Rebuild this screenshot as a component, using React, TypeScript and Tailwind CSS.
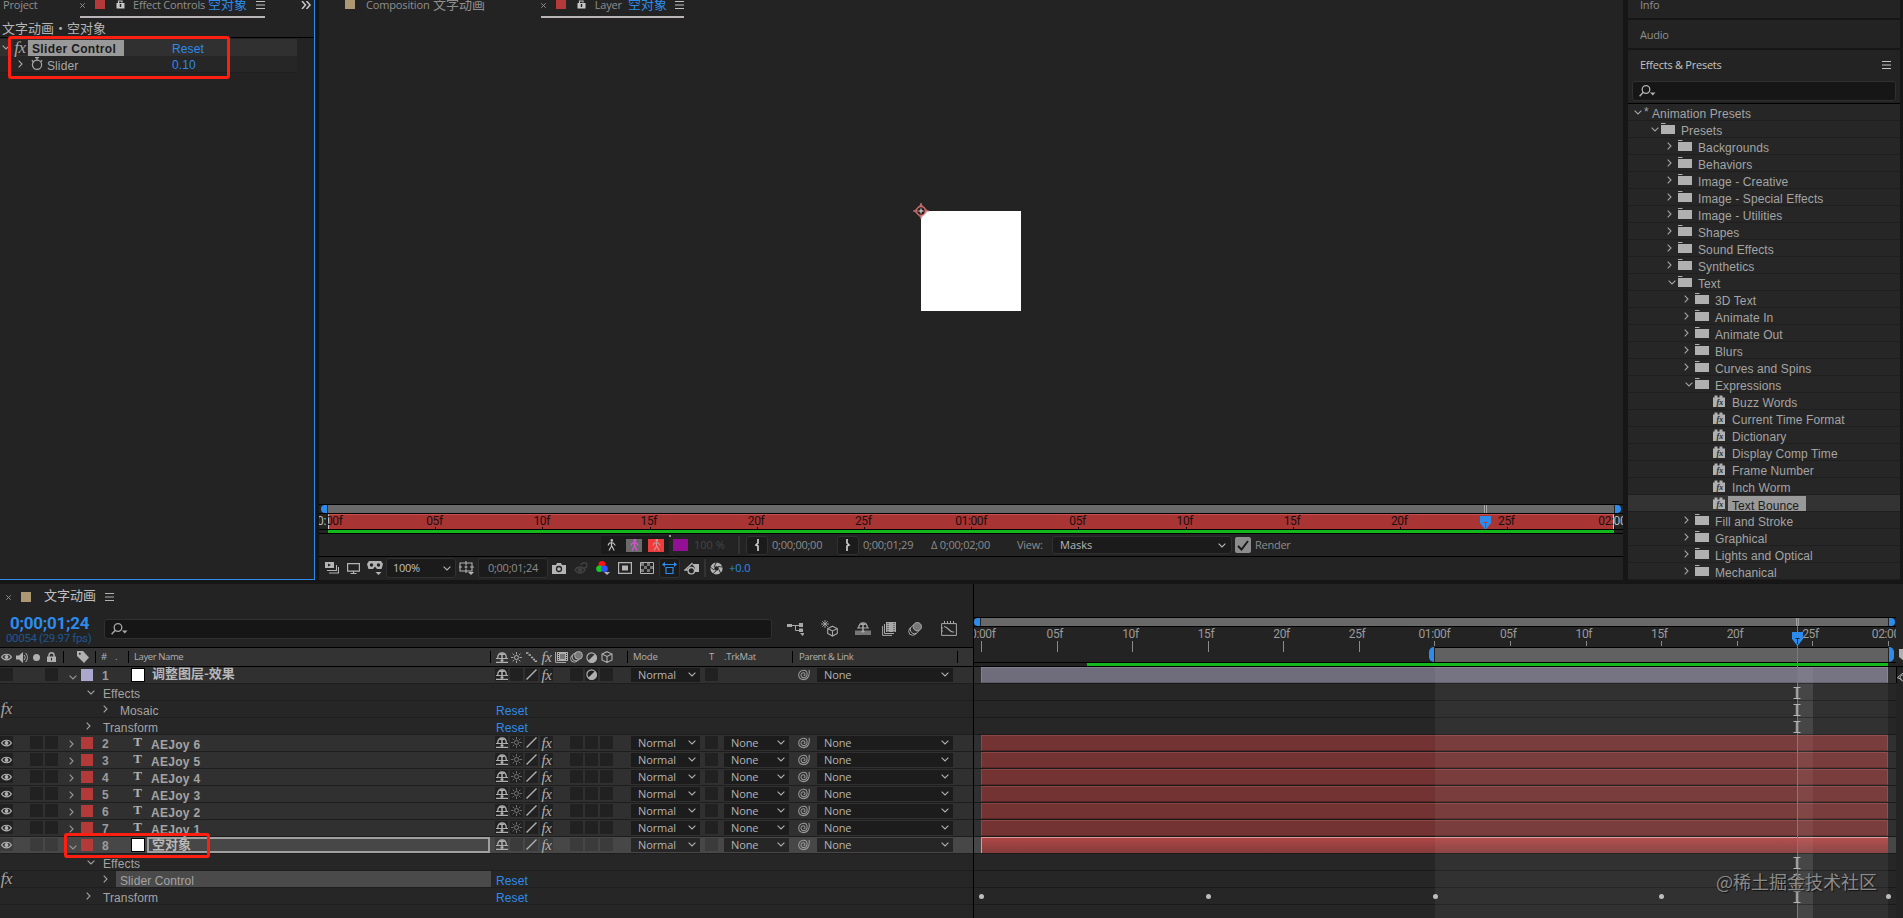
import type { ReactNode } from "react";

const UI = "[font-family:'Open_Sans','Noto_Sans_CJK_SC',sans-serif] text-[11px] leading-[14px] tracking-[-0.25px] whitespace-nowrap";
const TAB = "[font-family:'Open_Sans',sans-serif] text-[11px] leading-[10px] tracking-[-0.2px] whitespace-nowrap";
const HEAD = "[font-family:'Open_Sans',sans-serif] text-[9.5px] leading-[14px] tracking-[-0.4px] whitespace-nowrap";
const TREE = "[font-family:'Liberation_Sans','Noto_Sans_CJK_SC',sans-serif] text-[12px] leading-[16px] tracking-[0.1px] whitespace-nowrap";
const CJK = "[font-family:'Noto_Sans_CJK_SC',sans-serif] text-[13px] leading-[16px] whitespace-nowrap";
const TABCJK = "[font-family:'Noto_Sans_CJK_SC',sans-serif] text-[13px] leading-[8px] whitespace-nowrap";
const NUM = "[font-family:'Roboto',sans-serif] text-[12px] leading-[14px] tracking-[-0.35px] whitespace-nowrap";

type IconProps = { w: number; h: number; className?: string; children: ReactNode };
const Svg = ({ w, h, className = "", children }: IconProps) => (
  <svg width={w} height={h} viewBox={`0 0 ${w} ${h}`} className={`block shrink-0 ${className}`} fill="none" stroke="currentColor">
    {children}
  </svg>
);

const Down = ({ className = "" }: { className?: string }) => (
  <Svg w={8} h={5} className={className}><path d="M.6.7 4 4 7.4.7" strokeWidth="1.1" /></Svg>
);
const Right = ({ className = "" }: { className?: string }) => (
  <Svg w={5} h={8} className={className}><path d="M.7.6 4 4 .7 7.4" strokeWidth="1.1" /></Svg>
);
const Menu = () => (
  <Svg w={9} h={8}><path d="M0 .5h9M0 4h9M0 7.5h9" /></Svg>
);
const Close = () => (
  <Svg w={5} h={5}><path d="m.3.3 4.4 4.4M4.7.3.3 4.7" /></Svg>
);
const LockOpen = () => (
  <Svg w={9} h={9}><path d="M2.500 4V1h3.500v1.500" strokeWidth="1.200" /><path d="M.5 3h8v5.500h-8z" fill="currentColor" stroke="none" /><path d="M4.500 4v3" stroke="#232323" strokeWidth="1.500" /></Svg>
);
const Search = () => (
  <Svg w={17} h={12}><circle cx="7" cy="4.500" r="3.800" strokeWidth="1.300" /><path d="M4.300 7.300.6 11.200" strokeWidth="1.400" /><path d="M11 7.500h5.500l-2.700 3z" fill="currentColor" stroke="none" /></Svg>
);
const Folder = () => (
  <Svg w={14} h={11}><path d="M0 .5h4.500" /><path d="M0 2h14v9H0z" fill="currentColor" stroke="none" /></Svg>
);
const Preset = () => (
  <Svg w={12} h={12}>
    <path d="M0 2.500h1.500V.5h3v2h2V.5h3v2H12V12H0z" fill="currentColor" stroke="none" />
    <text x="3.500" y="10" fontSize="8" fontStyle="italic" fontFamily="Liberation Serif" fontWeight="bold" fill="#262626" stroke="none">fx</text>
  </Svg>
);
const Eye = () => (
  <Svg w={11} h={8}><path d="M.6 4C2.500.3 8.500.3 10.400 4 8.500 7.700 2.500 7.700.6 4z" strokeWidth="1.200" /><circle cx="5.500" cy="4" r="1.900" fill="currentColor" stroke="none" /></Svg>
);
const Fx = ({ big = false }: { big?: boolean }) => (
  <span className={big
    ? "block [font-family:'Liberation_Serif',serif] text-[17px] leading-[13px] italic tracking-[-0.5px]"
    : "block [font-family:'Liberation_Serif',serif] text-[15px] leading-[12px] italic tracking-[-0.5px]"}>fx</span>
);
const Shy = () => (
  <Svg w={12} h={11}><path d="M1.700 6C1.700-.8 10.300-.8 10.300 6" strokeWidth="1.300" /><path d="M3 3C4 .8 8 .8 9 3z" fill="currentColor" stroke="none" /><path d="M0 6.500h12M0 10.400h12" strokeWidth="1.100" /><path d="M6 2v8M4.500 8.500h3" strokeWidth="1.500" /></Svg>
);
const Sun = ({ dim = false }: { dim?: boolean }) => (
  <Svg w={11} h={11} className={dim ? "text-[#777]" : ""}>
    <circle cx="5.500" cy="5.500" r="2" /><path d="M5.500 0v2.500M5.500 8.500V11M0 5.500h2.500M8.500 5.500H11M1.600 1.600l1.700 1.700M7.700 7.700l1.700 1.700M9.400 1.600 7.700 3.300M3.300 7.700 1.600 9.400" strokeWidth=".9" />
  </Svg>
);
const Slash = () => (<Svg w={11} h={11}><path d="M.5 10.500 10.500.5" strokeWidth="1.400" /></Svg>);
const Steps = () => (<Svg w={11} h={10}><path d="M0 1h2.500M2.500 3H5M5 5.500h2.200M7 7.500h2M8.500 9.300H11" strokeWidth="1.700" /></Svg>);
const Film = () => (
  <Svg w={13} h={11}><path d="M.6 0v10.400H11" /><path d="M2 0h11v9H2z" fill="currentColor" stroke="none" /><path d="M5 2h5v5H5z" fill="#777" stroke="none" /><path d="M3.500 1v8M11.500 1v8" stroke="#2b2b2b" strokeDasharray="1 1" /></Svg>
);
const Blur = () => (
  <Svg w={13} h={12}><circle cx="4.300" cy="7.500" r="3.700" /><circle cx="6" cy="6" r="3.900" fill="#333" /><circle cx="8.500" cy="4.400" r="3.900" fill="#777" /></Svg>
);
const Half = () => (
  <Svg w={11} h={11}><circle cx="5.500" cy="5.500" r="4.600" strokeWidth="1.200" /><path d="M9 2A5 5 0 1 1 2 9z" fill="currentColor" stroke="none" /></Svg>
);
const Cube = () => (
  <Svg w={12} h={12}><path d="M6 .7 11 3v6L6 11.400 1 9V3zM1 3l5 2.400L11 3M6 5.400v6" strokeWidth="1.100" /></Svg>
);
const Spiral = () => (
  <Svg w={12} h={12}><path d="M11 .8c1 5-1 9.800-5 9.800C2.500 10.600.7 8.500.7 6S3 1.300 5.600 1.300c2 0 3.500 1.600 3.500 3.700S7.500 8.600 5.800 8.600 3 7.300 3 6.100s.9-2.300 2.200-2.300S7 4.700 7 5.500 6.300 6.600 5.600 6.400" strokeWidth="1.050" /></Svg>
);
const Person = () => (
  <Svg w={9} h={12}><circle cx="4.800" cy="1.400" r="1.300" fill="currentColor" stroke="none" /><path d="M4.500 3v4.200L2 11.500M4.800 7l2.400 4.500M1 6.500 2.300 4h4L8.300 6.500" strokeWidth="1.200" /></Svg>
);
const Stopwatch = () => (
  <Svg w={12} h={13}><circle cx="6" cy="7.800" r="4.600" strokeWidth="1.200" /><path d="M4 .6h4M6 .6v2.500M.8 3.200l1.600 1.500M11.200 3.200 9.600 4.700" strokeWidth="1.200" /></Svg>
);

/* ---------- Effect controls ---------- */
function EffectControls() {
  return (
    <section className="relative h-[580px] w-[315px] shrink-0 overflow-hidden border-r border-b border-[#2d8ceb] bg-[#232323]">
      <div className="flex h-[18px] items-start text-[#8f8f8f]">
        <span className={`${TAB} ml-[3px] w-[77px] shrink-0`}>Project</span>
        <div className="flex h-[18px] w-[185px] shrink-0 items-start border-b-2 border-[#b8b4b8]">
          <span className="mt-[3px]"><Close /></span>
          <span className="ml-[10px] h-[9px] w-[10px] shrink-0 bg-[#b43a39]" />
          <span className="ml-[11px] text-[#c8c8c8]"><LockOpen /></span>
          <span className={`${TAB} ml-[8px] w-[75px] shrink-0`}>Effect Controls</span>
          <span className={`${TABCJK} w-[39px] shrink-0 text-[#2d8ceb]`}>空对象</span>
          <span className="mt-[1px] ml-[9px] text-[#c0c0c0]"><Menu /></span>
        </div>
        <span className="ml-[36px] mt-[1px] text-[#c8c8c8]"><Svg w={10} h={8}><path d="M1 0l3.500 4L1 8M5.500 0 9 4 5.500 8" strokeWidth="1.500" /></Svg></span>
      </div>
      <div className={`${CJK} flex h-[20px] border-b border-black pl-[2px] pt-[2px] text-[#b5b5b5]`}>
        <span className="w-[52px]">文字动画</span><span className="w-[13px] text-center">•</span><span>空对象</span>
      </div>
      <div className="mt-px flex h-[17px] w-[297px] items-center bg-[#303030] text-[#a8a8a8]">
        <Down className="ml-[2px]" />
        <span className="ml-[3px] flex h-[15px] w-[14px] items-center justify-center bg-[#262626]"><Fx big /></span>
        <span className={`${TREE} ml-[1px] h-[16px] w-[96px] bg-[#999] pl-1 font-bold text-[12.5px] tracking-[0.350px] text-[#1b1b1b]`}><span className="relative top-[1px]">Slider Control</span></span>
        <span className={`${TREE} relative top-[1px] ml-[48px] text-[#2d8ceb]`}>Reset</span>
      </div>
      <div className="flex h-[17px] w-[297px] items-center border-b border-[#1e1e1e] bg-[#262626] text-[#a8a8a8]">
        <Right className="ml-[18px]" />
        <span className="ml-[8px] -mt-[2px]"><Stopwatch /></span>
        <span className={`${TREE} relative top-[2px] ml-[4px] w-[125px]`}>Slider</span>
        <span className={`${TREE} relative top-[1px] text-[#2d8ceb]`}>0.10</span>
      </div>
      <div className="absolute top-[36px] left-[8px] h-[43px] w-[222px] rounded-[3px] border-[3px] border-[#ff1f10]" />
    </section>
  );
}

/* ---------- Layer viewer ---------- */
const VIEW_MARKS = ["0:00f", "05f", "10f", "15f", "20f", "25f", "01:00f", "05f", "10f", "15f", "20f", "25f", "02:00f"];

const PlayheadHandle = ({ mark = "#222" }: { mark?: string }) => (
  <Svg w={11} h={14}><path d="M0 0h11v7l-5.500 7L0 7z" fill="#2d8ceb" stroke="none" /><path d="M3.500 6.500h4M5.500 7v5" stroke={mark} /></Svg>
);

function LayerViewer() {
  const box = "flex shrink-0 items-center justify-center rounded-[3px] border border-[#303030] bg-[#1b1b1b]";
  return (
    <section className="ml-[4px] flex h-[580px] w-[1304px] shrink-0 flex-col overflow-hidden bg-[#232323]">
      <div className="flex h-[18px] items-start text-[#8f8f8f]">
        <span className="ml-[26px] h-[9px] w-[10px] bg-[#ad9874]" />
        <span className={`${TAB} ml-[11px] w-[67px] tracking-[-0.15px]`}>Composition</span>
        <span className={`${TABCJK} w-[108px]`}>文字动画</span>
        <div className="flex h-[18px] w-[143px] items-start border-b-2 border-[#b8b4b8]">
          <span className="mt-[3px]"><Close /></span>
          <span className="ml-[10px] h-[9px] w-[10px] bg-[#b43a39]" />
          <span className="ml-[11px] text-[#c8c8c8]"><LockOpen /></span>
          <span className={`${TAB} ml-[9px] w-[34px]`}>Layer</span>
          <span className={`${TABCJK} w-[39px] text-[#2d8ceb]`}>空对象</span>
          <span className="mt-[1px] ml-[8px] text-[#c0c0c0]"><Menu /></span>
        </div>
      </div>
      <div className="relative h-[486px]">
        <div className="ml-[602px] mt-[193px] h-[100px] w-[100px] bg-white" />
        <div className="absolute left-[594px] top-[-15px] mt-[200px]">
          <Svg w={16} h={16}><path d="M8 0v4M8 12v4M0 8h4M12 8h4" stroke="#d98080" strokeWidth="1.200" /><path d="M8 1.500 14.500 8 8 14.500 1.500 8z" stroke="#d98080" /><circle cx="8" cy="8" r="4.300" stroke="#d96a6a" strokeWidth="1.300" fill="#2a2020" /><path d="M8 5.500v5M5.500 8h5" stroke="#eee" /></Svg>
        </div>
      </div>
      <div className="flex h-[10px] border-y border-black">
        <span className="ml-[2px] w-[6px] rounded-l-[6px] bg-[#2d8ceb]" />
        <span className="ml-px w-[1286px] bg-[#696969]"><span className="ml-[1156px] block h-full w-[3px] border-x border-[#aaa] bg-[#d22]" /></span>
        <span className="ml-px w-[6px] rounded-r-[6px] bg-[#2d8ceb]" />
      </div>
      <div className="relative h-[15px] overflow-hidden">
        <div className="ml-[9px] h-[15px] w-[1286px] border-x border-t border-[#ccc] border-t-[#c45050] bg-[#a83434]" />
        <div className="absolute top-0 left-[9px] flex w-[1400px]">
          {VIEW_MARKS.map((m, i) => (
            <span key={i} className={`${NUM} w-[107.200px] shrink-0 text-[#1c1010]`}>
              <span className={i === 0 ? "-ml-[11px] block" : i === 6 || i === 12 ? "-ml-[16px] block" : "-ml-[9px] block"}>
                {i === 0 ? <><span className="text-[#bbb]">0:</span>00f</> : i === 12 ? <>02:<span className="text-[#bbb]">00f</span></> : m}
              </span>
              {i > 0 && <span className="absolute top-[13px] block h-[2px] w-px bg-black" />}
            </span>
          ))}
        </div>
        <div className="absolute top-[2px] left-[1161px]"><PlayheadHandle mark="#c33" /></div>
      </div>
      <div className="h-[5px] border-y border-black bg-[#232323]"><div className="ml-[9px] h-[3px] w-[1286px] bg-[#12b81c]" /></div>
      <div className="flex h-[23px] items-center border-b border-black text-[#8c8c8c]">
        <div className="ml-[282px] flex h-[18px] w-[68px] items-center bg-[#1b1b1b]">
          <span className="ml-[6px] text-[#c4c4c4]"><Person /></span>
          <span className="ml-[10px] flex h-[13px] w-[16px] items-center justify-center bg-[#6a6a6a] text-[#e052e0]"><Person /></span>
          <span className="ml-[6px] flex h-[13px] w-[16px] items-center justify-center bg-[#ee3b3b] text-[#c99]"><Person /></span>
        </div>
        <span className="-mt-[18px] size-[2px] bg-[#999]" />
        <span className="ml-[2px] h-[12px] w-[15px] bg-[#930f93]" />
        <span className={`${UI} ml-[6px] w-[44px] tracking-[0px] text-[#454545]`}>100 %</span>
        <span className="h-[18px] w-[2px] bg-[#333]" />
        <span className={`${box} ml-[6px] h-[19px] w-[22px] text-[#ccc]`}><Svg w={6} h={12}><path d="M4 0v4L2 6l2 1v5" strokeWidth="1.700" /></Svg></span>
        <span className={`${UI} ml-[4px] w-[65px]`}>0;00;00;00</span>
        <span className={`${box} h-[19px] w-[22px] text-[#ccc]`}><Svg w={6} h={12}><path d="M2 0v4l2 2-2 1v5" strokeWidth="1.700" /></Svg></span>
        <span className={`${UI} ml-[4px] w-[68px]`}>0;00;01;29</span>
        <span className={`${UI} w-[86px]`}>Δ 0;00;02;00</span>
        <span className={`${UI} w-[35px]`}>View:</span>
        <span className="flex h-[18px] w-[180px] items-center justify-between rounded-[3px] border border-[#303030] bg-[#1b1b1b] pr-[5px] pl-[7px] text-[#b8b8b8]"><span className={`${UI} tracking-[0px]`}>Masks</span><Down /></span>
        <span className="ml-[3px] flex size-[16px] items-center justify-center rounded-[2px] bg-[#8c8c8c]"><Svg w={12} h={11}><path d="M1 6l3.500 3.500L11 1" stroke="#1a1a1a" strokeWidth="2" /></Svg></span>
        <span className={`${UI} ml-[4px]`}>Render</span>
      </div>
      <div className="flex h-[23px] items-center pb-px text-[#b4b4b4]">
        <Svg w={14} h={12} className="ml-[6px]"><path d="M0 0h9v6H0z" fill="currentColor" stroke="none" /><path d="M3 1.500v3L6 3z" fill="#222" stroke="none" /><path d="M2 8.500h9.500V3M4 11h9.500V5" strokeWidth="1.100" /></Svg>
        <Svg w={13} h={11} className="ml-[8px]"><path d="M.6.6h11.800v7.500H.6zM6.500 8v2.500M3.500 10.500h6" strokeWidth="1.200" /></Svg>
        <Svg w={16} h={14} className="ml-[7px]"><path d="M2 0h12l2 3-1.500 5H10L8 5.500 6 8H1.500L0 3z" fill="currentColor" stroke="none" /><circle cx="4.500" cy="4" r="1.700" fill="#222" stroke="none" /><circle cx="11.500" cy="4" r="1.700" fill="#222" stroke="none" /><path d="M8.500 11h6l-3 3z" fill="currentColor" stroke="none" /></Svg>
        <span className="ml-[3px] flex h-[20px] w-[70px] items-center justify-between rounded-[3px] border border-[#303030] bg-[#1b1b1b] pr-[4px] pl-[6px]"><span className={`${UI} text-[#c0c0c0]`}>100%</span><Down /></span>
        <Svg w={15} h={14} className="ml-[3px]"><path d="M1 2h12v8H1zM7 0v4M7 8v4M0 6h3M11 6h4M5.500 6h3M7 4.500v3" strokeWidth="1.100" /><path d="M9 11h6l-3 3z" fill="currentColor" stroke="none" /></Svg>
        <span className={`${box} ml-[4px] h-[20px] w-[70px] text-[#8c8c8c]`}><span className={UI}>0;00;01;24</span></span>
        <Svg w={14} h={11} className="ml-[4px]"><path d="M0 2h4l1-2h4l1 2h4v9H0z" fill="currentColor" stroke="none" /><circle cx="7" cy="6" r="2.500" stroke="#222" strokeWidth="1.300" /></Svg>
        <Svg w={14} h={13} className="ml-[8px] text-[#404040]"><path d="M1 8c2-4 8-4 10 0-2 4-8 4-10 0zM7 3c1-3 6-3 6 0 0 2-1 3-3 3" strokeWidth="1.400" /><circle cx="6" cy="8" r="2" fill="currentColor" /></Svg>
        <Svg w={14} h={14} className="ml-[8px]"><g stroke="none"><circle cx="6" cy="3.500" r="3.500" fill="#f11" /><circle cx="3.500" cy="7.800" r="3.300" fill="#1c2" /><circle cx="8.500" cy="7.800" r="3.300" fill="#35f" /><path d="M8 11h6l-3 3z" fill="currentColor" /></g></Svg>
        <Svg w={14} h={12} className="ml-[8px]"><path d="M.6.6h12.800v10.800H.6z" strokeWidth="1.200" /><path d="M4 3.500h6v5H4z" fill="currentColor" stroke="none" /></Svg>
        <Svg w={14} h={12} className="ml-[8px]"><path d="M.5.5h13v11H.5z" /><path d="M1 2.500h12M1 8.500h12" strokeDasharray="3 3" strokeWidth="3" stroke="#777" /><path d="M4 5.500h9" strokeDasharray="3 3" strokeWidth="3" stroke="#777" /></Svg>
        <span className={`${box} ml-[5px] h-[20px] w-[21px] text-[#2d8ceb]`}><Svg w={15} h={12}><path d="M1 2.500h13M4 5.500h7v6H4z" strokeWidth="1.200" /><path d="M0 2.500 3 0v5zM15 2.500 12 0v5z" fill="currentColor" stroke="none" /></Svg></span>
        <Svg w={15} h={13} className="ml-[4px]"><path d="M8.500 1 1 8h5" strokeWidth="1.300" /><path d="M8 2h7v8h-4V6z" fill="currentColor" stroke="none" /><circle cx="7.300" cy="8.700" r="3.200" fill="#232323" strokeWidth="1.300" /></Svg>
        <span className="ml-[5px] h-[18px] w-[2px] bg-[#333]" />
        <Svg w={13} h={13} className="ml-[4px]"><circle cx="6.500" cy="6.500" r="4.200" strokeWidth="3.800" /><path d="M6.500 0 4 5M12.800 5 8 4.500M11 12 9 7.500M2.500 12 6 9M.3 5 4 8" stroke="#232323" strokeWidth=".9" /></Svg>
        <span className={`${UI} ml-[6px] tracking-[-0.100px] text-[#2d8ceb]`}>+0.0</span>
      </div>
    </section>
  );
}

/* ---------- Effects & Presets ---------- */
type Node = { d: 1 | 2 | 3 | 4; t: string; open?: boolean; sel?: boolean };
const TREE_NODES: Node[] = [
  { d: 1, t: "Presets", open: true },
  { d: 2, t: "Backgrounds" }, { d: 2, t: "Behaviors" }, { d: 2, t: "Image - Creative" }, { d: 2, t: "Image - Special Effects" },
  { d: 2, t: "Image - Utilities" }, { d: 2, t: "Shapes" }, { d: 2, t: "Sound Effects" }, { d: 2, t: "Synthetics" },
  { d: 2, t: "Text", open: true },
  { d: 3, t: "3D Text" }, { d: 3, t: "Animate In" }, { d: 3, t: "Animate Out" }, { d: 3, t: "Blurs" }, { d: 3, t: "Curves and Spins" },
  { d: 3, t: "Expressions", open: true },
  { d: 4, t: "Buzz Words" }, { d: 4, t: "Current Time Format" }, { d: 4, t: "Dictionary" }, { d: 4, t: "Display Comp Time" },
  { d: 4, t: "Frame Number" }, { d: 4, t: "Inch Worm" }, { d: 4, t: "Text Bounce", sel: true },
  { d: 3, t: "Fill and Stroke" }, { d: 3, t: "Graphical" }, { d: 3, t: "Lights and Optical" }, { d: 3, t: "Mechanical" },
];
const INDENT = { 1: "w-[33px]", 2: "w-[50px]", 3: "w-[67px]", 4: "w-[85px]" };

function EffectsPresets() {
  return (
    <section className="ml-[5px] flex h-[580px] w-[272px] shrink-0 flex-col overflow-hidden bg-[#161616] text-[#8f8f8f]">
      <div className="h-[18px] bg-[#232323] pl-[12px]"><div className={TAB}>Info</div></div>
      <div className="mt-[2px] flex h-[28px] items-center bg-[#232323] pl-[12px] pt-px"><span className={UI}>Audio</span></div>
      <div className="mt-[2px] h-[54px] border-b border-black bg-[#232323]">
        <div className="flex h-[29px] items-center justify-between pr-[9px] pl-[12px] text-[#c4c4c4]"><span className={UI}>Effects &amp; Presets</span><Menu /></div>
        <div className="mx-[4px] mt-[2px] flex h-[20px] items-center rounded-[3px] border border-[#303030] bg-[#161616] pl-[6px] text-[#b0b0b0]"><Search /></div>
      </div>
      <div className={`${TREE} flex h-[17px] shrink-0 items-center border-b border-[#1e1e1e] bg-[#262626] pl-[6px] text-[#a4a4a4]`}>
        <Down /><span className="ml-[2px] w-[8px]">*</span><span className="relative top-[2px]">Animation Presets</span>
      </div>
      {TREE_NODES.map((n) => (
        <div key={n.t} className={`flex h-[17px] shrink-0 items-center border-b border-[#1e1e1e] text-[#a4a4a4] ${n.sel ? "bg-[#333]" : "bg-[#262626]"}`}>
          <span className={`${INDENT[n.d]} flex justify-end ${n.open ? "pr-[2px]" : "pr-[6px]"}`}>{n.d < 4 && (n.open ? <Down /> : <Right />)}</span>
          <span className="-mt-px w-[16px] text-[#b0b0b0]">{n.d < 4 ? <Folder /> : <Preset />}</span>
          <span className={n.sel ? `${TREE} -ml-px h-[15px] w-[78px] bg-[#999] pl-[4px] text-[#1b1b1b]` : n.d < 4 ? `${TREE} pl-[4px]` : `${TREE} pl-[3px]`}><span className="relative top-[2px]">{n.t}</span></span>
        </div>
      ))}
    </section>
  );
}

/* ---------- Timeline ---------- */
const Cell = ({ on = true, sel = false, children }: { on?: boolean; sel?: boolean; children?: ReactNode }) => (
  <span className={`flex h-[13px] w-[13px] shrink-0 items-center justify-center ${on ? (sel ? "bg-[#3b3b3b]" : "bg-[#212121]") : ""}`}>{children}</span>
);
const Drop = ({ className, label, sel }: { className: string; label: string; sel: boolean }) => (
  <span className={`${className} flex h-[14px] items-center justify-between pr-[4px] pl-[7px] ${sel ? "bg-[#262626]" : "bg-[#1c1c1c]"}`}>
    <span className={`${UI} -mt-px tracking-[-0.100px] text-[#b4b4b4]`}>{label}</span><Down className="-mt-px" />
  </span>
);

type Layer = { n: number; name: string; kind: "text" | "solid"; adj?: boolean; sel?: boolean };
function LayerRow({ n, name, kind, adj = false, sel = false }: Layer) {
  return (
    <div className={`flex h-[17px] items-start border-b border-[#1e1e1e] pt-[1px] text-[#b0b0b0] ${sel ? "bg-[#474747]" : "bg-[#303030]"}`}>
      <Cell sel={sel}>{!adj && <Eye />}</Cell>
      <span className="ml-[17px]"><Cell on={!adj} sel={sel} /></span>
      <span className="ml-[2px]"><Cell sel={sel} /></span>
      <span className="ml-[11px] flex h-[14px] w-[12px] items-center text-[#999]">{adj || sel ? <Down className="mt-1" /> : <span className="mt-[2px]"><Right /></span>}</span>
      <span className={`mt-[1px] h-[12px] w-[12px] ${adj ? "bg-[#aaa8cc]" : "bg-[#b43a39]"}`} />
      <span className={`${TREE} ml-[9px] w-[29px] font-bold text-[#9c9c9c]`}>{n}</span>
      {kind === "solid"
        ? <span className="h-[14px] w-[14px] border border-black bg-white" />
        : <span className="w-[14px] pr-px text-center [font-family:'Liberation_Serif',serif] text-[13px] leading-[12px] font-bold">T</span>}
      {sel
        ? <span className={`${CJK} -mt-px ml-[2px] flex h-[16px] w-[343px] items-center border-2 border-[#a0a0a0] pl-[3px] font-bold text-[#b8b8b8]`}><span className="-mt-[2px]">{name}</span></span>
        : <span className={kind === "solid" ? `${CJK} -mt-[3px] ml-[7px] w-[338px] font-bold text-[#b8b8b8]` : `${TREE} ml-[6px] w-[339px] pt-px font-bold tracking-[0.300px] text-[#a4a4a4]`}>{name}</span>}
      <div className="ml-[5px] flex w-[136px] gap-[2px]">
        <Cell sel={sel}><Shy /></Cell>
        <Cell sel={sel}>{!adj && !sel && <Sun dim />}</Cell>
        <Cell sel={sel}><Slash /></Cell>
        <Cell sel={sel}><Fx /></Cell>
        <Cell on={false} />
        <Cell sel={sel} />
        <Cell sel={sel}>{adj && <Half />}</Cell>
        <Cell sel={sel} />
      </div>
      <Drop className="w-[69px]" label="Normal" sel={sel} />
      <span className="ml-[5px] w-[19px]"><Cell sel={sel} /></span>
      {adj ? <span className="w-[65px]" /> : <Drop className="w-[65px]" label="None" sel={sel} />}
      <span className="ml-[9px] mt-px w-[19px] text-[#999]"><Spiral /></span>
      <Drop className="w-[136px]" label="None" sel={sel} />
    </div>
  );
}

type Prop = { label: string; deep?: boolean; open?: boolean; reset?: boolean; fx?: boolean; hl?: boolean };
function PropRow({ label, deep = false, open = false, reset = false, fx = false, hl = false }: Prop) {
  return (
    <div className="flex h-[17px] items-start border-b border-[#1e1e1e] bg-[#262626] text-[#a4a4a4]">
      <span className="mt-px w-[13px]">{fx && <Cell><Fx big /></Cell>}</span>
      <span className={`flex h-[16px] items-center ${deep ? "w-[103px] pl-[90px]" : open ? "w-[86px] pl-[74px]" : "w-[86px] pl-[73px]"}`}>{open ? <Down /> : <Right />}</span>
      <span className={`${TREE} ${deep ? "w-[375px] pl-[4px]" : "w-[392px] pl-[4px]"} ${hl ? "bg-[#4a4a4a]" : ""}`}><span className="relative top-[2px]">{label}</span></span>
      {reset && <span className={`${TREE} relative top-[2px] ml-[5px] text-[#2d8ceb]`}>Reset</span>}
    </div>
  );
}

const Sep = ({ className = "" }: { className?: string }) => <span className={`block h-[12px] w-px shrink-0 bg-black ${className}`} />;
const MARKS = ["0:00f", "05f", "10f", "15f", "20f", "25f", "01:00f", "05f", "10f", "15f", "20f", "25f", "02:00f"];
const TRACKS = ["adj", "prop", "prop", "prop", "red", "red", "red", "red", "red", "red", "sel", "prop", "prop", "keys", "end"];

function LayerPane() {
  return (
    <div className="flex h-[334px] w-[973px] shrink-0 flex-col bg-[#262626]">
      <div className="flex h-[25px] items-center bg-[#232323] text-[#b0b0b0]">
        <span className="mt-px ml-[6px] text-[#8f8f8f]"><Close /></span>
        <span className="ml-[10px] h-[10px] w-[10px] bg-[#ad9874]" />
        <span className={`${CJK} -mt-[3px] ml-[13px] w-[61px] text-[#c0c0c0]`}>文字动画</span>
        <span className="mt-px"><Menu /></span>
      </div>
      <div className="flex h-[38px] items-start bg-[#232323] text-[#a8a8a8]">
        <div className="w-[104px] pt-[6px] whitespace-nowrap [font-family:'Roboto',sans-serif]">
          <div className="pl-[10px] text-[17px] leading-[17px] font-bold tracking-[-0.250px] text-[#2d8ceb]">0;00;01;24</div>
          <div className="pl-[6px] text-[11.500px] leading-[12px] tracking-[-0.350px] text-[#1d5792]">00054 (29.97 fps)</div>
        </div>
        <div className="mt-[10px] flex h-[20px] w-[668px] items-center rounded-[3px] border border-[#303030] bg-[#161616] pl-[6px]"><Search /></div>
        <div className="mt-[11px] flex h-[17px] items-center">
          <Svg w={17} h={14} className="ml-[15px]"><path d="M0 2h5v3H0zM12 1h4v4h-4zM12 6.500h4v3.500h-4zM13 11h5l-2.500 3z" fill="currentColor" stroke="none" /><path d="M5 3.500h7M8.500 3.500v5H12" /></Svg>
          <Svg w={17} h={17} className="ml-[17px]"><path d="M4 0v8M0 4h8M1.200 1.200l5.600 5.600M6.800 1.200 1.200 6.800" strokeWidth=".9" /><path d="M11.500 6.200 16.300 8.500v5l-4.800 2.600-4.800-2.600v-5zM6.700 8.500l4.800 2.400 4.800-2.400M11.500 11v5" strokeWidth="1.100" /></Svg>
          <Svg w={16} h={13} className="ml-[17px]"><path d="M0 8.500h16V13H0z" fill="#777" stroke="none" /><path d="M3.700 6C3.700-.8 12.300-.8 12.300 6" strokeWidth="1.300" /><path d="M5 3C6 .8 10 .8 11 3z" fill="currentColor" stroke="none" /><path d="M2 6h12" /><path d="M8 2v8.500M6.500 9.500h3" strokeWidth="1.500" /></Svg>
          <Svg w={14} h={14} className="ml-[11px]"><path d="M.6 4v9.400H10M2.500 2v9.500H12" /><path d="M4 0h10v10H4z" fill="currentColor" stroke="none" /><path d="M6 1v9M12 1v9" stroke="#333" strokeDasharray="1 1" /></Svg>
          <Svg w={14} h={14} className="ml-[12px]"><circle cx="4.700" cy="9.300" r="4" /><circle cx="6.500" cy="7.500" r="4.200" fill="#2a2a2a" /><circle cx="9.300" cy="4.700" r="4.200" fill="#777" /></Svg>
          <Svg w={16} h={15} className="ml-[19px]"><path d="M.6 2.600h14.800v11.800H.6zM3.500 0v3M6.500 0v3M9.500 0v3M12.500 0v3M0 7h2M0 10h2" /><path d="M3 5.500c4 0 5 5.500 9 5.500h1" strokeWidth="1.200" /></Svg>
        </div>
      </div>
      <div className="flex h-[20px] items-center border-y border-black bg-[#333] text-[#b0b0b0]">
        <span className="ml-[1px]"><Eye /></span>
        <Svg w={12} h={11} className="ml-[4px]"><path d="M0 3.500h3L7 0v11L3 7.500H0z" fill="currentColor" stroke="none" /><path d="M8 3c1.500 1.500 1.500 3.500 0 5M9.500 1c2.600 2.500 2.600 6.500 0 9" /></Svg>
        <span className="ml-[5px] size-[7px] rounded-full bg-current" />
        <Svg w={9} h={10} className="ml-[7px]"><path d="M2 5V3c0-3 5-3 5 0v2" strokeWidth="1.400" /><path d="M0 4.500h9V10H0z" fill="currentColor" stroke="none" /><path d="M4.500 6v2.500" stroke="#222" /></Svg>
        <Sep className="ml-[7px]" />
        <Svg w={12} h={12} className="ml-[13px]"><path d="M0 0h6l6 6.500L7 12 0 5z" fill="currentColor" stroke="none" /><circle cx="2.800" cy="2.800" r="1" fill="#333" stroke="none" /></Svg>
        <Sep className="ml-[6px]" />
        <span className={`${HEAD} ml-[5px] w-[14px]`}>#</span>
        <span className={`${HEAD} w-[13px]`}>.</span>
        <Sep />
        <span className={`${HEAD} ml-[5px] w-[356px]`}>Layer Name</span>
        <Sep />
        <div className="ml-[4px] flex w-[132px] items-center gap-[2px]">
          {[<Shy />, <Sun />, <Steps />, <Fx />, <Film />, <Blur />, <Half />, <Cube />].map((ic, i) => (
            <span key={i} className="flex w-[13px] shrink-0 justify-center">{ic}</span>
          ))}
        </div>
        <Sep />
        <span className={`${HEAD} ml-[5px] w-[76px] tracking-[-0.200px]`}>Mode</span>
        <span className={`${HEAD} w-[15px]`}>T</span>
        <span className={`${HEAD} w-[68px] tracking-[-0.300px]`}>.TrkMat</span>
        <Sep />
        <span className={`${HEAD} ml-[6px] w-[158px] tracking-[-0.400px]`}>Parent &amp; Link</span>
        <Sep />
      </div>
      <LayerRow n={1} name="调整图层-效果" kind="solid" adj />
      <PropRow label="Effects" open />
      <PropRow label="Mosaic" deep fx reset />
      <PropRow label="Transform" reset />
      {[6, 5, 4, 3, 2, 1].map((k, i) => <LayerRow key={k} n={i + 2} name={`AEJoy ${k}`} kind="text" />)}
      <LayerRow n={8} name="空对象" kind="solid" sel />
      <PropRow label="Effects" open />
      <PropRow label="Slider Control" deep fx reset hl />
      <PropRow label="Transform" reset />
    </div>
  );
}

const Ibeam = () => (
  <Svg w={8} h={12} className="text-[#b4b4b4]"><path d="M.5.500h7M.5 11.500h7M3.300.500v11M4.800.500v11" /></Svg>
);

function TrackPane() {
  return (
    <div className="relative h-[334px] w-[923px] shrink-0 overflow-hidden border-l border-black bg-[#232323]">
      <div className="mt-[33px] flex h-[10px] border-y border-black">
        <span className="w-[6px] rounded-l-[6px] bg-[#2d8ceb]" />
        <span className="ml-px w-[907px] bg-[#696969]" />
        <span className="ml-px w-[6px] rounded-r-[6px] bg-[#2d8ceb]" />
      </div>
      <div className="relative h-[20px]">
        <div className="flex w-[1000px] pl-[7px]">
          {MARKS.map((m, i) => (
            <div key={i} className={`${NUM} w-[75.570px] shrink-0 text-[#9a9a9a]`}>
              <div className={i === 0 ? "-ml-[11px]" : i === 6 || i === 12 ? "-ml-[16px]" : "-ml-[10px]"}>{m}</div>
              <div className={`w-px bg-[#8a8a8a] ${i < 6 ? "h-[11px]" : "h-[5px]"}`} />
            </div>
          ))}
        </div>
      </div>
      <div className="flex h-[15px]">
        <span className="ml-[455px] w-[5px] rounded-l-[5px] bg-[#2d8ceb]" />
        <span className="ml-px w-[453px] border-t border-black bg-[#616161]" />
        <span className="ml-px w-[5px] rounded-r-[5px] bg-[#2d8ceb]" />
      </div>
      <div className="h-[5px] border-y border-black"><div className="ml-[113px] h-[3px] w-[801px] bg-[#12b81c]" /></div>
      {TRACKS.map((t, i) => (
        <div key={i} className={`flex h-[17px] border-b border-[#1a1a1a] pl-[7px] ${t === "sel" ? "bg-[#474747]" : t === "adj" || t === "red" ? "bg-[#303030]" : "bg-[#262626]"}`}>
          {t === "adj" && <div className="h-[16px] w-[907px] border-x border-t border-b border-[#82808e] border-b-[#5d5b69] bg-[#6f6d7c]" />}
          {t === "red" && <div className="h-[16px] w-[907px] border border-[#8a4545] border-b-[#5c2626] bg-[#733333]" />}
          {t === "sel" && <div className="h-[16px] w-[907px] border-t border-l border-[#d99] bg-linear-to-b from-[#af4646] to-[#853b3b]" />}
        </div>
      ))}
      <div className="absolute top-[83px] left-[461px] h-[251px] w-[453px] bg-white/5" />
      <div className="absolute top-[83px] left-[824px] h-[251px] w-[15px] bg-white/5" />
      {[100, 117, 134, 270, 287, 304, 321].map((y) => (
        <div key={y} className="absolute left-[824px] h-[16px] w-[15px] bg-white/6" style={{ top: y }} />
      ))}
      <div className="absolute top-[310px] left-[5px] flex w-[912px] justify-between">
        {[0, 1, 2, 3, 4].map((k) => <span key={k} className="size-[5px] rounded-full bg-[#bdbdbd]" />)}
      </div>
      <div className="absolute top-[34px] left-[822px] h-[8px] w-[3px] bg-[#a0a0a0]" />
      <div className="absolute top-[34px] left-[823px] h-[300px] w-px bg-[#2d8ceb]" />
      <div className="absolute top-[48px] left-[818px]"><PlayheadHandle /></div>
      {[103, 120, 137, 273, 290, 307].map((y) => (
        <div key={y} className="absolute left-[819px]" style={{ top: y }}><Ibeam /></div>
      ))}
      <div className="absolute top-[286px] left-[742px] [font-family:'Noto_Sans_CJK_SC',sans-serif] text-[18px] leading-[22px] whitespace-nowrap text-[#8b8b8b] [text-shadow:1px_1px_1px_#111]">@稀土掘金技术社区</div>
    </div>
  );
}

export default function App() {
  return (
    <main className="h-[918px] w-[1903px] overflow-hidden bg-[#161616]">
      <div className="flex h-[584px]">
        <EffectControls />
        <LayerViewer />
        <EffectsPresets />
      </div>
      <div className="relative flex h-[334px]">
        <LayerPane />
        <TrackPane />
        <div className="w-[7px] overflow-hidden bg-[#232323] pt-[65px] text-[#b0b0b0]">
          <Svg w={12} h={13} className="ml-[3px]"><path d="M0 0h12v8l-6 5-6-5z" fill="currentColor" stroke="none" /></Svg>
          <div className="mt-[4px] h-[17px] border-t border-l border-black pt-[4px]"><Svg w={12} h={12}><path d="M1 6 8 .5v8M6 10a3 3 0 1 1 .1 0M0 6.500l5 2" /></Svg></div>
        </div>
        <div className="absolute top-[249px] left-[64px] h-[25px] w-[146px] rounded-[3px] border-[3px] border-[#ff1f10]" />
      </div>
    </main>
  );
}
